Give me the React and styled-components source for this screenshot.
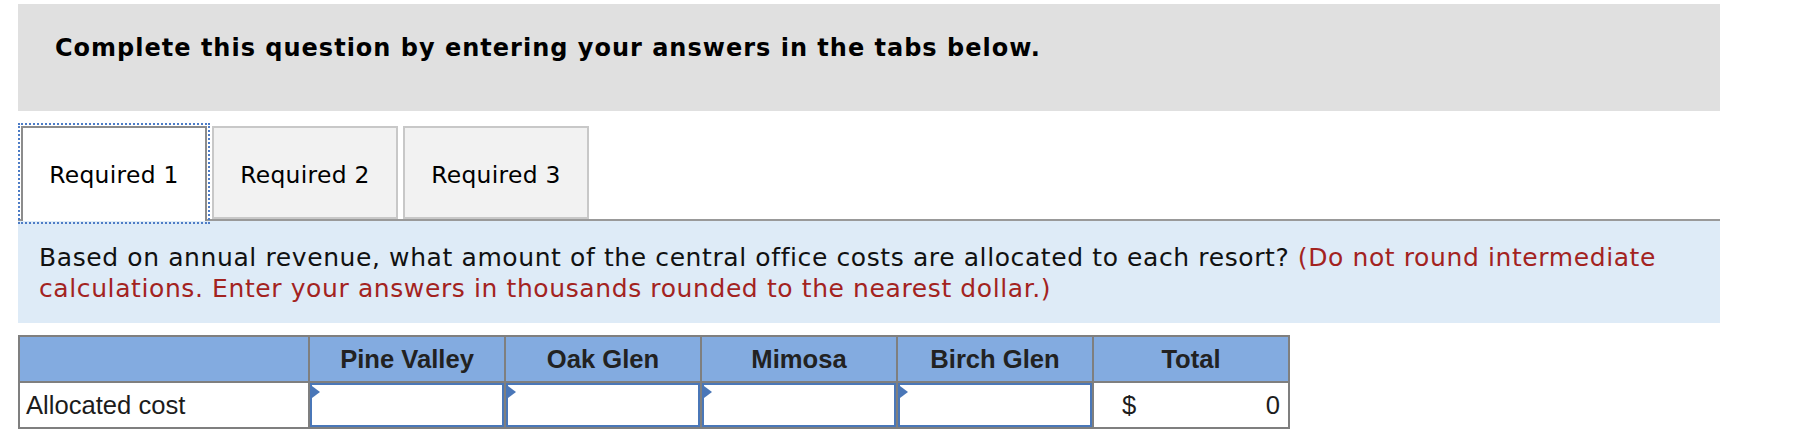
import React from "react";
import styled, { createGlobalStyle } from "styled-components";

const GlobalStyle = createGlobalStyle`
  body {
    margin: 0;
    background: #fff;
    font-family: "DejaVu Sans", Verdana, sans-serif;
  }
`;

const Page = styled.div`
  width: 1702px;
  padding: 4px 0 0 18px;
`;

const Banner = styled.div`
  height: 107px;
  box-sizing: border-box;
  padding: 30px 0 0 37px;
  background: #e0e0e0;
  font-size: 24px;
  line-height: 28px;
  letter-spacing: 1px;
  font-weight: bold;
  color: #000;
`;

const TabBar = styled.div`
  display: flex;
  gap: 5px;
  margin-top: 15px;
  padding-left: 3px;
  border-bottom: 2px solid #999;
`;

const Tab = styled.button`
  display: flex;
  align-items: center;
  justify-content: center;
  width: 186px;
  height: ${(p) => (p.$active ? "95px" : "93px")};
  margin-bottom: ${(p) => (p.$active ? "-2px" : "0")};
  box-sizing: border-box;
  padding: ${(p) => (p.$active ? "0" : "4px 0 0")};
  border: 2px solid ${(p) => (p.$active ? "#8c8c8c" : "#c8c8c8")};
  border-bottom: ${(p) => (p.$active ? "none" : "2px solid #c8c8c8")};
  background: ${(p) => (p.$active ? "#fff" : "#f2f2f2")};
  outline: ${(p) => (p.$active ? "2px dotted #4d7cc6" : "none")};
  outline-offset: 1px;
  font-family: "DejaVu Sans", Verdana, sans-serif;
  font-size: 23.4px;
  letter-spacing: 0.3px;
  color: #000;
`;

const Prompt = styled.div`
  background: #deebf7;
  padding: 21px 21px 19px 21px;
  font-size: 25px;
  line-height: 31px;
  letter-spacing: 0.6px;
  color: #111;
`;

const Hint = styled.span`
  color: #a3231f;
`;

const Grid = styled.table`
  margin-top: 12px;
  width: 1271px;
  table-layout: fixed;
  border-collapse: collapse;
  font-family: "Liberation Sans", Arial, sans-serif;
  font-size: 25.6px;
  color: #1c1c1c;
`;

const HeadCell = styled.th`
  height: 44px;
  padding: 0;
  border: 2px solid #7f7f7f;
  background: #83abe0;
  font-weight: bold;
  text-align: center;
  vertical-align: middle;
  color: #222;
`;

const LabelCell = styled.td`
  height: 43px;
  padding: 0 0 0 6px;
  border: 2px solid #7f7f7f;
  vertical-align: middle;
`;

const InputCell = styled.td`
  position: relative;
  height: 43px;
  padding: 0;
  border: 2px solid #7f7f7f;
`;

const AmountInput = styled.input`
  display: block;
  width: 100%;
  height: 44px;
  box-sizing: border-box;
  border: 2px solid #4a77b8;
  background: #fff;
  font-family: "Liberation Sans", Arial, sans-serif;
  font-size: 25.6px;
  text-align: right;
  outline: none;
`;

const Marker = styled.span`
  position: absolute;
  top: 3px;
  left: 2px;
  width: 0;
  height: 0;
  border-top: 6px solid transparent;
  border-bottom: 6px solid transparent;
  border-left: 8px solid #4a77b8;
`;

const TotalCell = styled.td`
  height: 43px;
  padding: 0 8px 0 28px;
  border: 2px solid #7f7f7f;
  vertical-align: middle;
`;

const TotalInner = styled.div`
  display: flex;
  justify-content: space-between;
`;

const resorts = ["Pine Valley", "Oak Glen", "Mimosa", "Birch Glen"];

export default function App() {
  return (
    <>
      <GlobalStyle />
      <Page>
        <Banner>Complete this question by entering your answers in the tabs below.</Banner>
        <TabBar>
          <Tab $active>Required 1</Tab>
          <Tab>Required 2</Tab>
          <Tab>Required 3</Tab>
        </TabBar>
        <Prompt>
          Based on annual revenue, what amount of the central office costs are
          allocated to each resort?{" "}
          <Hint>
            (Do not round intermediate calculations. Enter your answers in
            thousands rounded to the nearest dollar.)
          </Hint>
        </Prompt>
        <Grid>
          <colgroup>
            <col style={{ width: 290 }} />
            {resorts.map((r) => (
              <col key={r} style={{ width: 196 }} />
            ))}
            <col style={{ width: 196 }} />
          </colgroup>
          <thead>
            <tr>
              <HeadCell />
              {resorts.map((r) => (
                <HeadCell key={r}>{r}</HeadCell>
              ))}
              <HeadCell>Total</HeadCell>
            </tr>
          </thead>
          <tbody>
            <tr>
              <LabelCell>Allocated cost</LabelCell>
              {resorts.map((r) => (
                <InputCell key={r}>
                  <AmountInput type="text" aria-label={r} />
                  <Marker />
                </InputCell>
              ))}
              <TotalCell>
                <TotalInner>
                  <span>$</span>
                  <span>0</span>
                </TotalInner>
              </TotalCell>
            </tr>
          </tbody>
        </Grid>
      </Page>
    </>
  );
}
